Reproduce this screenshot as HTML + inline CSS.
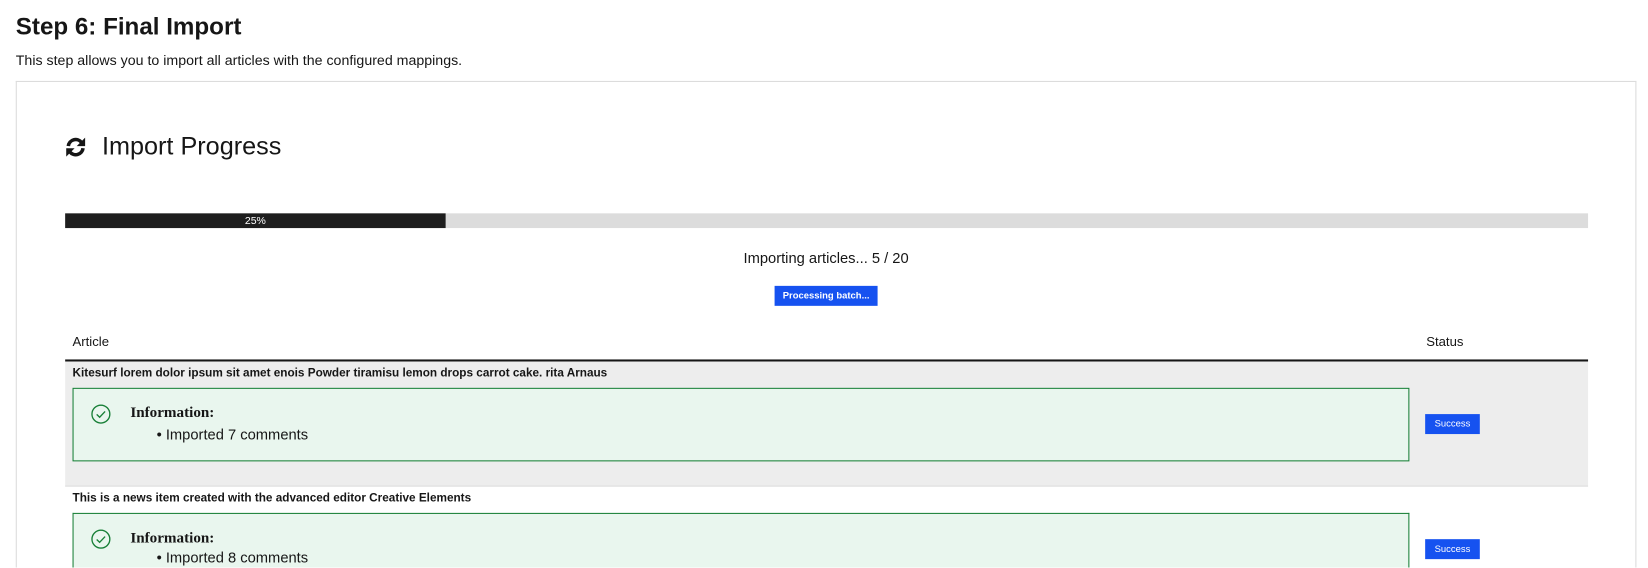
<!DOCTYPE html>
<html style="overflow:hidden;height:568px"><head><meta charset="utf-8"><style>
body{margin:0;width:1648px;height:568px;overflow:hidden;background:#fff;font-family:"Liberation Sans",sans-serif;color:#161616;position:relative}
#w{position:absolute;left:0;top:0;width:1568px;height:540px;overflow:hidden;transform:scale(1.051);transform-origin:0 0}
.a{position:absolute;white-space:nowrap}
h1{position:absolute;left:15px;top:11px;margin:0;font-size:23px;font-weight:bold;line-height:28px}
.box{position:absolute;left:69px;width:1270px;height:68px;border:1px solid #198038;background:#e9f6ee}
.badge{position:absolute;left:1356px;width:52px;height:19px;background:#1652f0;color:#fff;font-size:9px;text-align:center;line-height:19px}
.info{font-family:"Liberation Serif",serif;font-weight:bold;font-size:14.4px}
.li{font-size:14px}
</style></head><body><div id="w">
<h1>Step 6: Final Import</h1>
<div class="a" style="left:15px;top:50px;font-size:13.5px">This step allows you to import all articles with the configured mappings.</div>
<div class="a" style="left:15px;top:77px;width:1540px;height:462px;border:1px solid #dcdcdc;border-bottom:none"></div>
<svg class="a" style="left:61px;top:130px" width="22" height="20" viewBox="0 0 22 20"><g fill="none" stroke="#161616" stroke-width="3.4"><path d="M4 9 A7 7 0 0 1 16.5 5.5"/><path d="M18 11 A7 7 0 0 1 5.5 14.5"/></g><path d="M20 1 L20 9 L12 9 Z" fill="#161616"/><path d="M2 19 L2 11 L10 11 Z" fill="#161616"/></svg>
<div class="a" style="left:97px;top:126px;font-size:24px;line-height:28px">Import Progress</div>
<div class="a" style="left:62px;top:203px;width:1449px;height:14px;background:#dcdcdc"></div>
<div class="a" style="left:62px;top:203px;width:362px;height:14px;background:#1e1e1e;color:#fff;font-size:10px;line-height:15px;text-align:center">25%</div>
<div class="a" style="left:0;width:1572px;top:237px;text-align:center;font-size:14px">Importing articles... 5 / 20</div>
<div class="a" style="left:737px;top:272px;width:98px;height:19px;background:#1652f0;color:#fff;font-size:9px;font-weight:bold;line-height:19px;text-align:center">Processing batch...</div>
<div class="a" style="left:69px;top:318px;font-size:12.5px">Article</div>
<div class="a" style="left:1357px;top:318px;font-size:12.5px">Status</div>
<div class="a" style="left:62px;top:342px;width:1449px;height:2px;background:#161616"></div>
<div class="a" style="left:62px;top:344px;width:1449px;height:118px;background:#ededed;border-bottom:1px solid #dcdcdc"></div>
<div class="a" style="left:69px;top:349px;font-size:11.2px;font-weight:bold">Kitesurf lorem dolor ipsum sit amet enois Powder tiramisu lemon drops carrot cake. rita Arnaus</div>
<div class="box" style="top:369px"></div>
<svg class="a" style="left:86px;top:384px" width="20" height="20" viewBox="0 0 20 20"><circle cx="10" cy="10" r="8.5" fill="none" stroke="#198038" stroke-width="1.3"/><path d="M6 10.3 L8.8 13 L14 7.5" fill="none" stroke="#198038" stroke-width="1.3"/></svg>
<div class="a info" style="left:124px;top:385px">Information:</div>
<div class="a li" style="left:149px;top:405px">• Imported 7 comments</div>
<div class="badge" style="top:394px">Success</div>
<div class="a" style="left:69px;top:468px;font-size:11.2px;font-weight:bold">This is a news item created with the advanced editor Creative Elements</div>
<div class="box" style="top:488px;height:52px;border-bottom:none"></div>
<svg class="a" style="left:86px;top:503px" width="20" height="20" viewBox="0 0 20 20"><circle cx="10" cy="10" r="8.5" fill="none" stroke="#198038" stroke-width="1.3"/><path d="M6 10.3 L8.8 13 L14 7.5" fill="none" stroke="#198038" stroke-width="1.3"/></svg>
<div class="a info" style="left:124px;top:504px">Information:</div>
<div class="a li" style="left:149px;top:522px">• Imported 8 comments</div>
<div class="badge" style="top:513px">Success</div>
</div></body></html>
